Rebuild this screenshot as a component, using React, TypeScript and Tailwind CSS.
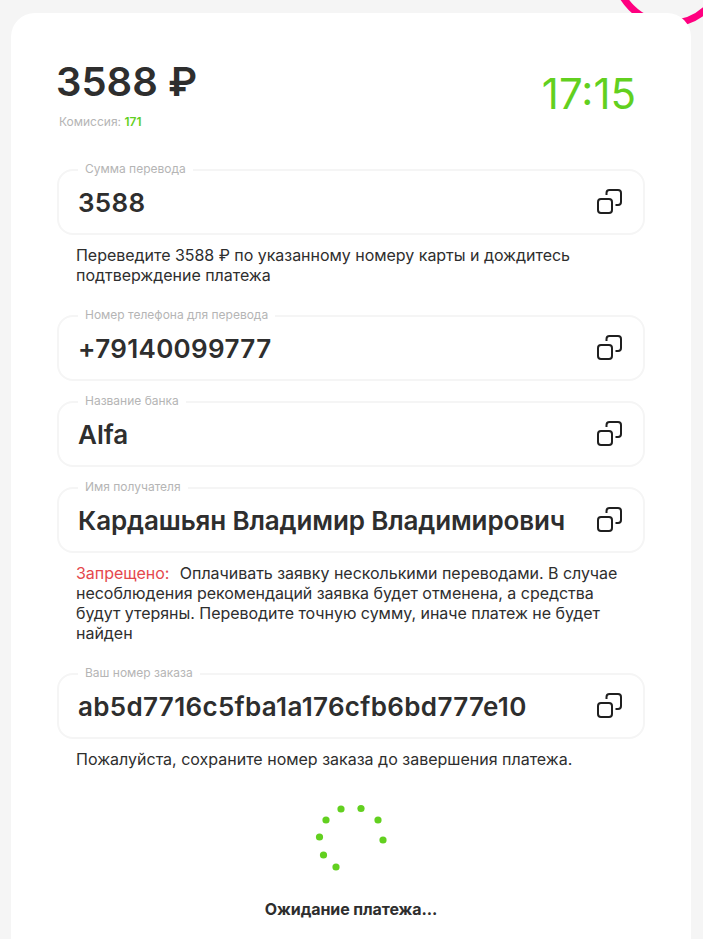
const inter = "font-['Inter',sans-serif]";

function CopyIcon() {
  return (
    <svg width="26" height="26" viewBox="0 0 26 26" fill="none" stroke="#1f1f1f" strokeWidth="2" className="shrink-0">
      <rect x="2" y="10" width="14" height="14" rx="3" />
      <path d="M10.5 6V4a3 3 0 0 1 3-3H22a3 3 0 0 1 3 3v9a3 3 0 0 1-3 3h-2.5" />
    </svg>
  );
}

function Field({ label, value, tracking }: { label: string; value: string; tracking: string }) {
  return (
    <div className="relative flex h-[66px] items-center justify-between rounded-2xl border-2 border-[#f5f5f5] pl-[19px] pr-[21px]">
      <span className="absolute left-[19px] top-[-9px] bg-white px-[7px] text-xs leading-[14px] text-[#b5b5b5]">{label}</span>
      <span className={`${tracking} mt-px text-[26px] leading-8 font-semibold text-[#2e2e2e]`}>{value}</span>
      <CopyIcon />
    </div>
  );
}

function Spinner() {
  const dots = [
    [31, 10], [51, 9.5], [68, 21], [73, 41], [26, 68], [13.5, 56], [9.5, 38], [16, 21],
  ];
  return (
    <svg width="82" height="78" viewBox="0 0 82 78" fill="#62d01f" className="mx-auto block">
      {dots.map(([x, y], i) => (
        <circle key={i} cx={x} cy={y} r="3.6" />
      ))}
    </svg>
  );
}

export default function App() {
  return (
    <div className={`${inter} relative h-[939px] overflow-hidden bg-[#f5f5f5] pl-[11px] pr-3 pt-[13px]`}>
      <div className="absolute left-[612px] top-[-88px] h-[115px] w-[115px] rounded-full border-[7px] border-[#ff0080]" />
      <main className="relative min-h-[960px] rounded-3xl bg-white px-[46px] pt-[44px]">
        <header className="flex items-start justify-between pr-[9px]">
          <div>
            <div className="-ml-px text-[40px] leading-[50px] font-semibold text-[#2e2e2e]">3588 ₽</div>
            <div className="ml-[2px] mt-[7px] text-xs leading-4 text-[#b5b5b5]">
              Комиссия: <span className="font-semibold text-[#62cf22]">171</span>
            </div>
          </div>
          <div className="mt-[12px] text-[42px] leading-[50px] text-[#62d01f]">17:15</div>
        </header>

        <div className="mt-[39px]">
          <Field label="Сумма перевода" value="3588" tracking="tracking-[0.3px]" />
          <p className="mt-[10px] px-[19px] text-base leading-5 tracking-[-0.03px] text-[#2e2e2e]">
            Переведите 3588 ₽ по указанному номеру карты и дождитесь подтверждение платежа
          </p>
        </div>

        <div className="mt-[30px] flex flex-col gap-[20px]">
          <Field label="Номер телефона для перевода" value="+79140099777" tracking="tracking-[0.33px]" />
          <Field label="Название банка" value="Alfa" tracking="tracking-normal" />
          <Field label="Имя получателя" value="Кардашьян Владимир Владимирович" tracking="tracking-[-0.13px]" />
        </div>

        <p className="mt-[10px] px-[19px] text-base leading-5 tracking-[-0.03px] text-[#2e2e2e]">
          <span className="mr-[6px] text-[#e5484d]">Запрещено:</span>{" "}
          Оплачивать заявку несколькими переводами. В случае несоблюдения рекомендаций заявка будет отменена, а средства будут утеряны. Переводите точную сумму, иначе платеж не будет найден
        </p>

        <div className="mt-[30px]">
          <Field label="Ваш номер заказа" value="ab5d7716c5fba1a176cfb6bd777e10" tracking="tracking-[0.33px]" />
          <p className="mt-[10px] px-[19px] text-base leading-5 text-[#2e2e2e]">
            Пожалуйста, сохраните номер заказа до завершения платежа.
          </p>
        </div>

        <div className="mt-[30px]">
          <Spinner />
          <p className="mt-[22px] text-center text-base leading-5 font-bold tracking-[-0.1px] text-[#2e2e2e]">Ожидание платежа...</p>
        </div>
      </main>
    </div>
  );
}
